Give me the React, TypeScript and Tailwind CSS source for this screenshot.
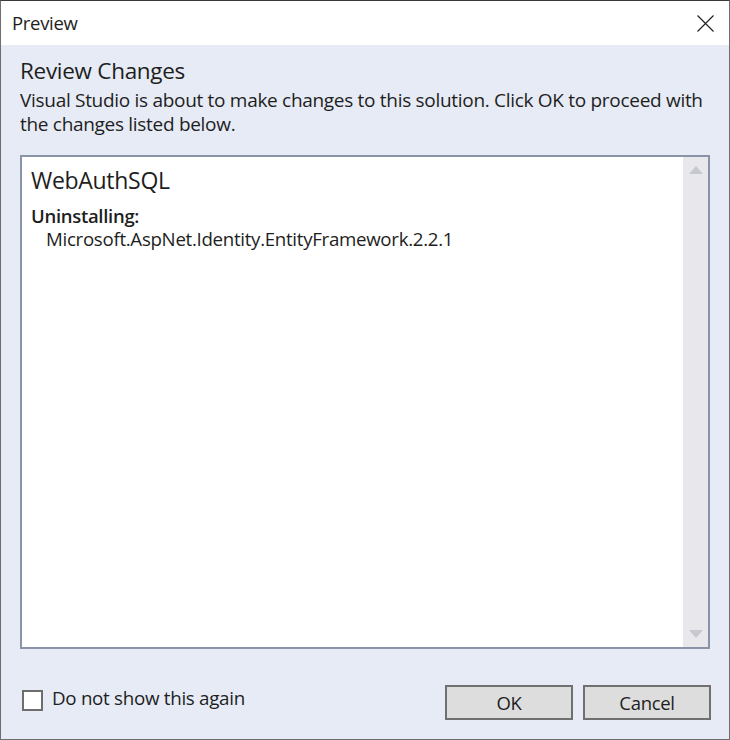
export default function App() {
  return (
    <div
      className="w-[730px] h-[740px] flex flex-col border border-[#6e6e6e] border-t-[#3a3a3a] bg-[#e6ebf5] text-[#1e1e1e]"
      style={{ fontFamily: '"Open Sans", "Noto Sans", sans-serif' }}
    >
      {/* title bar */}
      <div className="h-[44px] shrink-0 bg-white flex items-center justify-between pl-[11px] pr-[15px]">
        <span className="text-[18.5px] tracking-[-0.3px] text-[#1e1e1e]">Preview</span>
        <svg width="17" height="17" viewBox="0 0 17 17" className="mt-[1px]">
          <path d="M0.5 0.5L16.5 16.5M16.5 0.5L0.5 16.5" stroke="#1e1e1e" strokeWidth="1.1" />
        </svg>
      </div>

      {/* body */}
      <div className="flex-1 flex flex-col px-[18px] pt-[11px] pb-[19px]">
        <h1 className="text-[22.5px] leading-[30px] tracking-[-0.3px] pl-[1px]">Review Changes</h1>
        <p className="text-[19px] leading-[24px] tracking-[-0.3px] mt-[2px] pl-[1px]">
          Visual Studio is about to make changes to this solution. Click OK to proceed with
          <br />
          the changes listed below.
        </p>

        {/* changes list */}
        <div className="mt-[19px] ml-[1px] mr-[1px] h-[494px] border-2 border-[#8a93a8] bg-white flex">
          <div className="flex-1 pl-[9px] pt-[8px]">
            <div className="text-[23px] leading-[30px] tracking-[-0.3px]">WebAuthSQL</div>
            <div className="mt-[10px] text-[18.5px] leading-[22px] font-semibold tracking-[-0.3px]">Uninstalling:</div>
            <div className="text-[18.7px] leading-[24px] tracking-[-0.3px] pl-[15px]">
              Microsoft.AspNet.Identity.EntityFramework.2.2.1
            </div>
          </div>
          <div className="w-[25px] bg-[#e8e8ec] flex flex-col items-center justify-between py-[9px]">
            <svg width="14" height="8" viewBox="0 0 14 8">
              <path d="M7 0L14 8H0Z" fill="#c6c8d0" />
            </svg>
            <svg width="14" height="8" viewBox="0 0 14 8">
              <path d="M0 0H14L7 8Z" fill="#c6c8d0" />
            </svg>
          </div>
        </div>

        {/* footer */}
        <div className="mt-auto flex items-center justify-between">
          <label className="flex items-center gap-[9px] pl-[3px] -mt-[4px]">
            <span className="w-[21px] h-[21px] border-2 border-[#6e6e6e] bg-white block" />
            <span className="text-[18.8px] tracking-[-0.3px] -mt-[4px]">Do not show this again</span>
          </label>
          <div className="flex gap-[10px]">
            <button className="w-[128px] h-[35px] border-2 border-[#707070] bg-[#dddddd] text-[18.5px] tracking-[-0.3px]">OK</button>
            <button className="w-[128px] h-[35px] border-2 border-[#707070] bg-[#dddddd] text-[18.5px] tracking-[-0.3px]">Cancel</button>
          </div>
        </div>
      </div>
    </div>
  );
}
